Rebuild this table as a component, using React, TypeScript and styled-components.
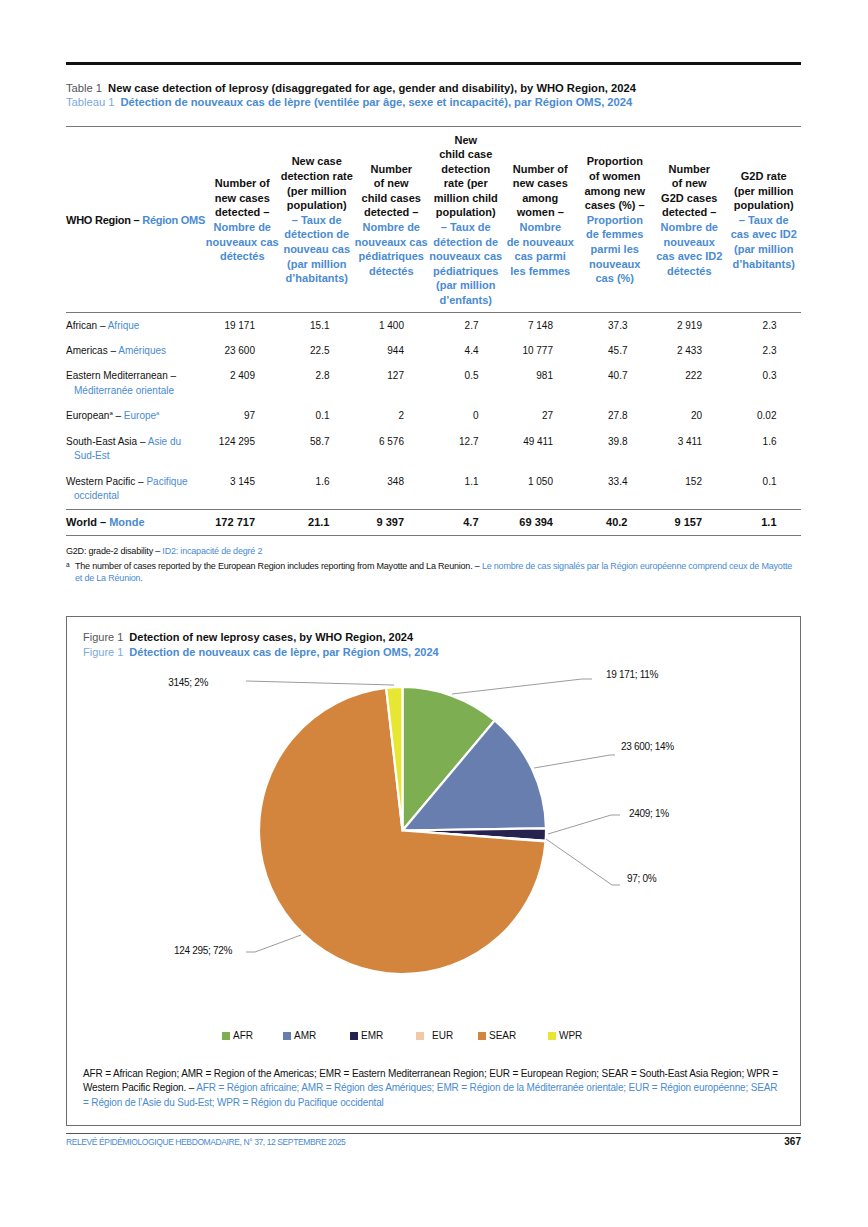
import React from "react";
import styled, { createGlobalStyle } from "styled-components";

const SANS = '"Liberation Sans", Arial, sans-serif';
const BLUE = "#4a8bd2";

const Global = createGlobalStyle`
  html, body { margin: 0; padding: 0; background: #ffffff; }
  body { font-family: ${SANS}; color: #111; }
`;

const Page = styled.div`
  width: 735px;
  margin-left: 66px;
  padding-top: 62px;
  padding-bottom: 40px;
`;

const TopRule = styled.div`
  height: 3px;
  background: #111;
`;

const Caption = styled.div`
  margin-top: 16px;
  font-size: 11.2px;
  line-height: 14px;
`;

const FigCaption = styled.div`
  font-size: 11px;
  line-height: 15px;
`;

const CaptionLine = styled.div<{ $fr?: boolean }>`
  white-space: nowrap;
  color: ${(p) => (p.$fr ? BLUE : "#111")};
`;

const CapLabel = styled.span<{ $fr?: boolean }>`
  font-weight: 400;
  color: ${(p) => (p.$fr ? "#7aa9dd" : "#555")};
  margin-right: 6px;
`;

const CapText = styled.span`
  font-weight: 700;
`;

const Table = styled.table`
  margin-top: 17px;
  width: 735px;
  table-layout: fixed;
  border-collapse: collapse;
  border-top: 1px solid #777;
  border-bottom: 1px solid #777;
`;

const HeadCell = styled.th<{ $first?: boolean }>`
  font-size: 11px;
  line-height: 14.6px;
  font-weight: 700;
  vertical-align: middle;
  text-align: ${(p) => (p.$first ? "left" : "center")};
  letter-spacing: ${(p) => (p.$first ? "-0.25px" : "0")};
  padding: 5.5px 0 4.5px 0;
  border-bottom: 1px solid #777;
  color: #111;
`;

const HeadLine = styled.span<{ $fr?: boolean }>`
  display: block;
  white-space: nowrap;
  color: ${(p) => (p.$fr ? BLUE : "#111")};
`;

const Fr = styled.span`
  color: ${BLUE};
`;

const Row = styled.tr<{ $total?: boolean }>`
  border-top: ${(p) => (p.$total ? "1px solid #777" : "none")};
`;

const RegionCell = styled.td<{ $bold?: boolean }>`
  font-size: ${(p) => (p.$bold ? "11px" : "10px")};
  font-weight: ${(p) => (p.$bold ? 700 : 400)};
  line-height: 14.6px;
  padding: 5.8px 0 4.9px 8px;
  text-indent: -8px;
  vertical-align: top;
  text-align: left;
  color: #111;
`;

const NumCell = styled.td<{ $bold?: boolean }>`
  font-size: ${(p) => (p.$bold ? "11px" : "10px")};
  font-weight: ${(p) => (p.$bold ? 700 : 400)};
  line-height: 14.6px;
  padding: 5.8px 24.5px 4.9px 0;
  vertical-align: top;
  text-align: right;
  white-space: nowrap;
  color: #111;
`;

const Sup = styled.sup`
  font-size: 6px;
  line-height: 0;
  vertical-align: 4px;
`;

const Notes = styled.div`
  margin-top: 9px;
  font-size: 9px;
  letter-spacing: -0.2px;
  line-height: 12px;
  color: #111;
`;

const NoteLine = styled.div`
  margin-bottom: 3px;
`;

const FootNote = styled.div`
  display: flex;
  gap: 5px;
`;

const FootMark = styled.span`
  font-size: 6.5px;
  line-height: 10px;
  width: 4px;
  flex: none;
`;

const FootText = styled.p`
  margin: 0;
`;

const FigureBox = styled.div`
  margin-top: 32px;
  border: 1px solid #6d6d6d;
  padding: 13px 16px 15px 16px;
`;

const ChartSvg = styled.svg`
  display: block;
  margin: 0 -16px;
`;

const Legend = styled.div`
  margin-top: 29px;
  display: flex;
  padding-left: 139px;
  font-size: 10px;
  line-height: 14px;
  color: #111;
`;

const LegendItem = styled.div<{ $w: number; $gap: number }>`
  display: flex;
  align-items: center;
  width: ${(p) => p.$w}px;
  gap: ${(p) => p.$gap}px;
`;

const Swatch = styled.span<{ $c: string }>`
  width: 8px;
  height: 8px;
  background: ${(p) => p.$c};
  display: inline-block;
  flex: none;
`;

const FigNotes = styled.div`
  margin-top: 24px;
  font-size: 10px;
  letter-spacing: -0.15px;
  line-height: 14.5px;
  color: #111;
`;

const NotesLine = styled.div`
  white-space: nowrap;
`;

const Footer = styled.div`
  margin-top: 7px;
  border-top: 1px solid #555;
  display: flex;
  justify-content: space-between;
  align-items: center;
  padding-top: 1px;
  line-height: 14px;
`;

const FooterLeft = styled.span`
  color: ${BLUE};
  font-size: 8.5px;
  letter-spacing: -0.4px;
  text-transform: uppercase;
`;

const FooterRight = styled.span`
  font-size: 10px;
  font-weight: 700;
  color: #111;
`;

type Header = { en: string[]; fr: string[] };

const headers: Header[] = [
  { en: ["Number of", "new cases", "detected –"], fr: ["Nombre de", "nouveaux cas", "détectés"] },
  { en: ["New case", "detection rate", "(per million", "population)"], fr: ["– Taux de", "détection de", "nouveau cas", "(par million", "d’habitants)"] },
  { en: ["Number", "of new", "child cases", "detected –"], fr: ["Nombre de", "nouveaux cas", "pédiatriques", "détectés"] },
  { en: ["New", "child case", "detection", "rate (per", "million child", "population)"], fr: ["– Taux de", "détection de", "nouveaux cas", "pédiatriques", "(par million", "d’enfants)"] },
  { en: ["Number of", "new cases", "among", "women –"], fr: ["Nombre", "de nouveaux", "cas parmi", "les femmes"] },
  { en: ["Proportion", "of women", "among new", "cases (%) –"], fr: ["Proportion", "de femmes", "parmi les", "nouveaux", "cas (%)"] },
  { en: ["Number", "of new", "G2D cases", "detected –"], fr: ["Nombre de", "nouveaux", "cas avec ID2", "détectés"] },
  { en: ["G2D rate", "(per million", "population)"], fr: ["– Taux de", "cas avec ID2", "(par million", "d’habitants)"] },
];

type DataRow = { label: React.ReactNode; v: string[] };

const rows: DataRow[] = [
  { label: <>African – <Fr>Afrique</Fr></>, v: ["19 171", "15.1", "1 400", "2.7", "7 148", "37.3", "2 919", "2.3"] },
  { label: <>Americas – <Fr>Amériques</Fr></>, v: ["23 600", "22.5", "944", "4.4", "10 777", "45.7", "2 433", "2.3"] },
  { label: <>Eastern Mediterranean –<br /><Fr>Méditerranée orientale</Fr></>, v: ["2 409", "2.8", "127", "0.5", "981", "40.7", "222", "0.3"] },
  { label: <>European<Sup>a</Sup> – <Fr>Europe<Sup>a</Sup></Fr></>, v: ["97", "0.1", "2", "0", "27", "27.8", "20", "0.02"] },
  { label: <>South-East Asia – <Fr>Asie du</Fr><br /><Fr>Sud-Est</Fr></>, v: ["124 295", "58.7", "6 576", "12.7", "49 411", "39.8", "3 411", "1.6"] },
  { label: <>Western Pacific – <Fr>Pacifique</Fr><br /><Fr>occidental</Fr></>, v: ["3 145", "1.6", "348", "1.1", "1 050", "33.4", "152", "0.1"] },
];

const world = ["172 717", "21.1", "9 397", "4.7", "69 394", "40.2", "9 157", "1.1"];

const slices = [
  { key: "AFR", value: 19171, color: "#7daf52", w: 61, gap: 3 },
  { key: "AMR", value: 23600, color: "#687eae", w: 67, gap: 3 },
  { key: "EMR", value: 2409, color: "#27234f", w: 66, gap: 3 },
  { key: "EUR", value: 97, color: "#f0c9a6", w: 62, gap: 8 },
  { key: "SEAR", value: 124295, color: "#d4853d", w: 70, gap: 3 },
  { key: "WPR", value: 3145, color: "#e7e733", w: 60, gap: 3 },
];

const CX = 335.5;
const CY = 171.5;
const R = 143.5;

function pt(a: number): [number, number] {
  const rad = (a * Math.PI) / 180;
  return [CX + R * Math.sin(rad), CY - R * Math.cos(rad)];
}

function PieChart() {
  const total = slices.reduce((s, d) => s + d.value, 0);
  let acc = 0;
  const paths = slices.map((d) => {
    const a0 = (acc / total) * 360;
    acc += d.value;
    const a1 = (acc / total) * 360;
    const [x0, y0] = pt(a0);
    const [x1, y1] = pt(a1);
    const large = a1 - a0 > 180 ? 1 : 0;
    const dd = `M${CX},${CY} L${x0.toFixed(2)},${y0.toFixed(2)} A${R},${R} 0 ${large} 1 ${x1.toFixed(2)},${y1.toFixed(2)} Z`;
    return <path key={d.key} d={dd} fill={d.color} stroke="#fff" strokeWidth={2.2} strokeLinejoin="round" />;
  });
  const lines = [
    "525,20 515,20 385,35",
    "548,96 543,96 467,109",
    "553,156 544,156 481,175",
    "479,180 545,226 553,226",
    "179,293 188,293 234,276",
    "179,22 327,26",
  ];
  const labels: { x: number; y: number; t: string; anchor: "start" | "end" }[] = [
    { x: 539, y: 15, t: "19 171; 11%", anchor: "start" },
    { x: 554, y: 87, t: "23 600; 14%", anchor: "start" },
    { x: 562, y: 154, t: "2409; 1%", anchor: "start" },
    { x: 560, y: 219, t: "97; 0%", anchor: "start" },
    { x: 165, y: 291, t: "124 295; 72%", anchor: "end" },
    { x: 141, y: 23, t: "3145; 2%", anchor: "end" },
  ];
  return (
    <ChartSvg width={733} height={340} viewBox="0 0 733 340">
      <g transform="translate(0,-1)">
        {paths}
        {lines.map((p, i) => (
          <polyline key={i} points={p} fill="none" stroke="#9c9c9c" strokeWidth={1} />
        ))}
        {labels.map((l, i) => (
          <text
            key={i}
            x={l.x}
            y={l.y}
            textAnchor={l.anchor}
            dominantBaseline="central"
            fontFamily={SANS}
            fontSize={10}
            letterSpacing={-0.3}
            fill="#111"
          >
            {l.t}
          </text>
        ))}
      </g>
    </ChartSvg>
  );
}

export default function App() {
  return (
    <>
      <Global />
      <Page>
        <TopRule />
        <Caption>
          <CaptionLine>
            <CapLabel>Table 1</CapLabel>
            <CapText>New case detection of leprosy (disaggregated for age, gender and disability), by WHO Region, 2024</CapText>
          </CaptionLine>
          <CaptionLine $fr>
            <CapLabel $fr>Tableau 1</CapLabel>
            <CapText>Détection de nouveaux cas de lèpre (ventilée par âge, sexe et incapacité), par Région OMS, 2024</CapText>
          </CaptionLine>
        </Caption>

        <Table>
          <colgroup>
            <col style={{ width: "139px" }} />
            {headers.map((_, i) => (
              <col key={i} style={{ width: "74.5px" }} />
            ))}
          </colgroup>
          <thead>
            <tr>
              <HeadCell $first>
                <HeadLine>
                  WHO Region – <Fr>Région OMS</Fr>
                </HeadLine>
              </HeadCell>
              {headers.map((h, i) => (
                <HeadCell key={i}>
                  {h.en.map((l, j) => (
                    <HeadLine key={"e" + j}>{l}</HeadLine>
                  ))}
                  {h.fr.map((l, j) => (
                    <HeadLine key={"f" + j} $fr>
                      {l}
                    </HeadLine>
                  ))}
                </HeadCell>
              ))}
            </tr>
          </thead>
          <tbody>
            {rows.map((r, i) => (
              <Row key={i}>
                <RegionCell>{r.label}</RegionCell>
                {r.v.map((v, j) => (
                  <NumCell key={j}>{v}</NumCell>
                ))}
              </Row>
            ))}
            <Row $total>
              <RegionCell $bold>
                World – <Fr>Monde</Fr>
              </RegionCell>
              {world.map((v, j) => (
                <NumCell key={j} $bold>
                  {v}
                </NumCell>
              ))}
            </Row>
          </tbody>
        </Table>

        <Notes>
          <NoteLine>
            G2D: grade-2 disability – <Fr>ID2: incapacité de degré 2</Fr>
          </NoteLine>
          <FootNote>
            <FootMark>a</FootMark>
            <FootText>
              The number of cases reported by the European Region includes reporting from Mayotte and La Reunion. –{" "}
              <Fr>Le nombre de cas signalés par la Région européenne comprend ceux de Mayotte</Fr>
              <br />
              <Fr>et de La Réunion.</Fr>
            </FootText>
          </FootNote>
        </Notes>

        <FigureBox>
          <FigCaption>
            <CaptionLine>
              <CapLabel>Figure 1</CapLabel>
              <CapText>Detection of new leprosy cases, by WHO Region, 2024</CapText>
            </CaptionLine>
            <CaptionLine $fr>
              <CapLabel $fr>Figure 1</CapLabel>
              <CapText>Détection de nouveaux cas de lèpre, par Région OMS, 2024</CapText>
            </CaptionLine>
          </FigCaption>
          <PieChart />
          <Legend>
            {slices.map((s) => (
              <LegendItem key={s.key} $w={s.w} $gap={s.gap}>
                <Swatch $c={s.color} />
                <span>{s.key}</span>
              </LegendItem>
            ))}
          </Legend>
          <FigNotes>
            <NotesLine>
              AFR = African Region; AMR = Region of the Americas; EMR = Eastern Mediterranean Region; EUR = European Region; SEAR = South-East Asia Region; WPR =
            </NotesLine>
            <NotesLine>
              Western Pacific Region. –{" "}
              <Fr>AFR = Région africaine; AMR = Région des Amériques; EMR = Région de la Méditerranée orientale; EUR = Région européenne; SEAR</Fr>
            </NotesLine>
            <NotesLine>
              <Fr>= Région de l’Asie du Sud-Est; WPR = Région du Pacifique occidental</Fr>
            </NotesLine>
          </FigNotes>
        </FigureBox>

        <Footer>
          <FooterLeft>Relevé épidémiologique hebdomadaire, N° 37, 12 septembre 2025</FooterLeft>
          <FooterRight>367</FooterRight>
        </Footer>
      </Page>
    </>
  );
}
